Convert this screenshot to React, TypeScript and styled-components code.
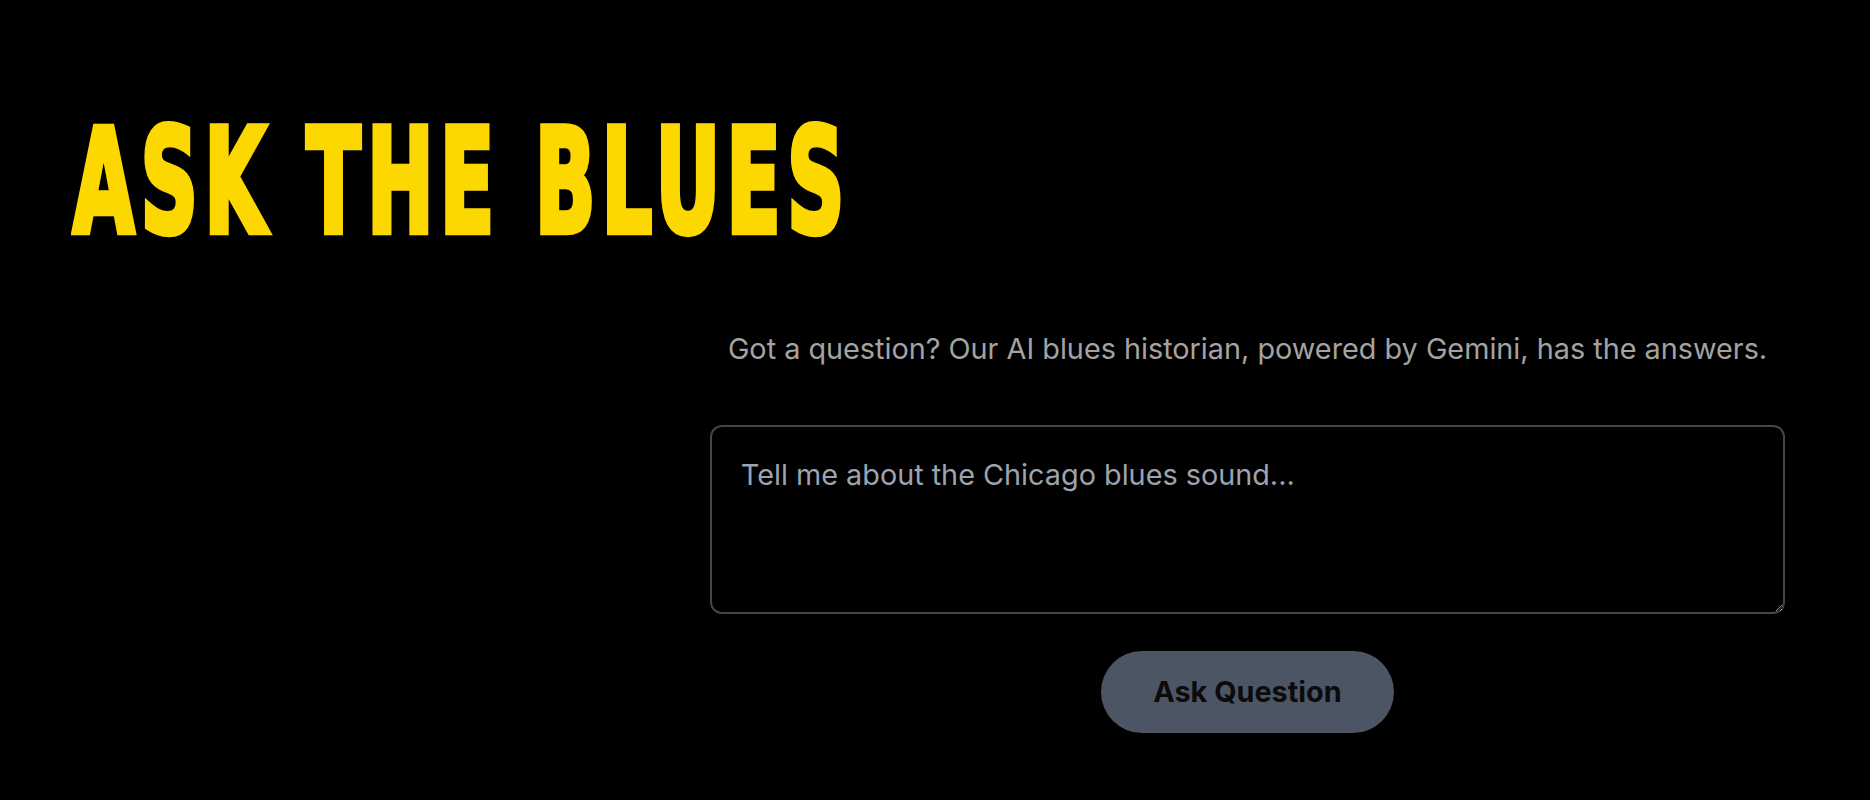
import React from "react";
import styled, { createGlobalStyle } from "styled-components";

const GlobalStyle = createGlobalStyle`
  html, body { margin: 0; padding: 0; background: #000; }
  body { font-family: Inter, "Noto Sans", sans-serif; color: #fff; }
  * { box-sizing: border-box; }
`;

const Page = styled.main`
  min-height: 800px;
  background: #000;
  padding: 111px 0 0 0;
`;

const Header = styled.header`
  height: 141px;
  padding-left: 73px;
`;

const Title = styled.h1`
  margin: 0;
  font-family: "DejaVu Sans Condensed", "DejaVu Sans", sans-serif;
  font-weight: 700;
  font-size: 88px;
  line-height: 1;
  letter-spacing: 6.6px;
  color: #fcd800;
  -webkit-text-stroke: 4px #fcd800;
  white-space: nowrap;
  transform: scaleY(1.64);
  transform-origin: left top;
`;

const Section = styled.section`
  display: grid;
  grid-template-columns: 625px 1fr;
  margin-top: 77px;
`;

const Aside = styled.div``;

const FormColumn = styled.div`
  max-width: 1075px;
  width: 100%;
  margin: 0 auto;
  display: flex;
  flex-direction: column;
  align-items: center;
`;

const Lead = styled.p`
  margin: 0;
  font-family: Inter, sans-serif;
  font-size: 28.8px;
  line-height: 40.3px;
  color: #a3a3a3;
  text-align: center;
`;

const Form = styled.form`
  width: 100%;
  margin-top: 56px;
  display: flex;
  flex-direction: column;
  align-items: center;
  gap: 37px;
`;

const Question = styled.textarea`
  width: 100%;
  height: 189px;
  padding: 28.8px;
  border: 2.4px solid #3f4652;
  border-radius: 12px;
  background: transparent;
  color: #e5e7eb;
  color-scheme: dark;
  font-family: Inter, sans-serif;
  font-size: 28.8px;
  line-height: 38.4px;
  outline: none;
  &::placeholder {
    color: #9ca3af;
  }
`;

const AskButton = styled.button`
  border: none;
  border-radius: 9999px;
  background: #4b5563;
  color: #0b0b0b;
  font-family: Inter, sans-serif;
  font-weight: 700;
  font-size: 28.8px;
  line-height: 38.4px;
  padding: 21.6px 52px;
  cursor: pointer;
`;

export default function App() {
  return (
    <>
      <GlobalStyle />
      <Page>
        <Header>
          <Title>ASK THE BLUES</Title>
        </Header>
        <Section>
          <Aside />
          <FormColumn>
            <Lead>Got a question? Our AI blues historian, powered by Gemini, has the answers.</Lead>
            <Form onSubmit={(e) => e.preventDefault()}>
              <Question placeholder="Tell me about the Chicago blues sound..." />
              <AskButton type="submit">Ask Question</AskButton>
            </Form>
          </FormColumn>
        </Section>
      </Page>
    </>
  );
}
